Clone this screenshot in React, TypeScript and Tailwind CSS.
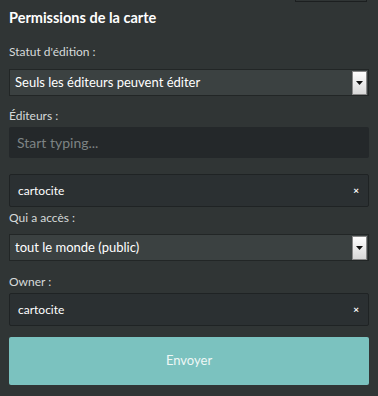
export default function App() {
  const font = { fontFamily: 'Lato, "Noto Sans", sans-serif' };

  const Label = ({ children }: { children: string }) => (
    <div className="text-[12px] leading-[16px] text-[#d6dada]">{children}</div>
  );

  const Select = ({ value }: { value: string }) => (
    <div className="flex h-[27px] items-center border border-[#222626] bg-[#3b4141] pl-[5px]">
      <span className="flex-1 text-[13px] text-white">{value}</span>
      <span className="mr-[1px] flex h-[24px] w-[15px] items-center justify-center border border-[#888] bg-gradient-to-b from-white to-[#d8d8d8]">
        <svg width="7" height="4" viewBox="0 0 7 4">
          <path d="M0 0h7L3.5 4z" fill="#111" />
        </svg>
      </span>
    </div>
  );

  const Tag = ({ value }: { value: string }) => (
    <div className="flex h-[33px] items-center rounded-[2px] border border-[#1f2324] bg-[#2b3032] pl-[8px] pr-[9px]">
      <span className="flex-1 text-[12px] text-white">{value}</span>
      <span className="text-[10px] font-bold text-white">×</span>
    </div>
  );

  return (
    <div className="h-[396px] w-[378px] overflow-hidden bg-[#303535] px-[9px]" style={font}>
      <div className="flex justify-end pr-[2px]">
        <div className="h-[2px] w-[72px] border-x border-b border-[#1c1f20]" />
      </div>
      <h3 className="mt-[6px] text-[14.5px] font-bold leading-[20px] text-white">Permissions de la carte</h3>

      <div className="mt-[16px]">
        <Label>Statut d'édition :</Label>
      </div>
      <div className="mt-[9px]">
        <Select value="Seuls les éditeurs peuvent éditer" />
      </div>

      <div className="mt-[12px]">
        <Label>Éditeurs :</Label>
      </div>
      <div className="mt-[3px] flex h-[31px] items-center rounded-[2px] bg-[#24282a] px-[8px]">
        <span className="text-[14px] text-[#7d8384]">Start typing...</span>
      </div>

      <div className="mt-[16px]">
        <Tag value="cartocite" />
      </div>

      <div className="mt-[3px]">
        <Label>Qui a accès :</Label>
      </div>
      <div className="mt-[8px]">
        <Select value="tout le monde (public)" />
      </div>

      <div className="mt-[13px]">
        <Label>Owner :</Label>
      </div>
      <div className="mt-[3px]">
        <Tag value="cartocite" />
      </div>

      <button className="mt-[11px] flex h-[48px] w-full items-center justify-center rounded-[2px] bg-[#7bc2bf] text-[13px] text-[#eef7f6]">
        Envoyer
      </button>
    </div>
  );
}
